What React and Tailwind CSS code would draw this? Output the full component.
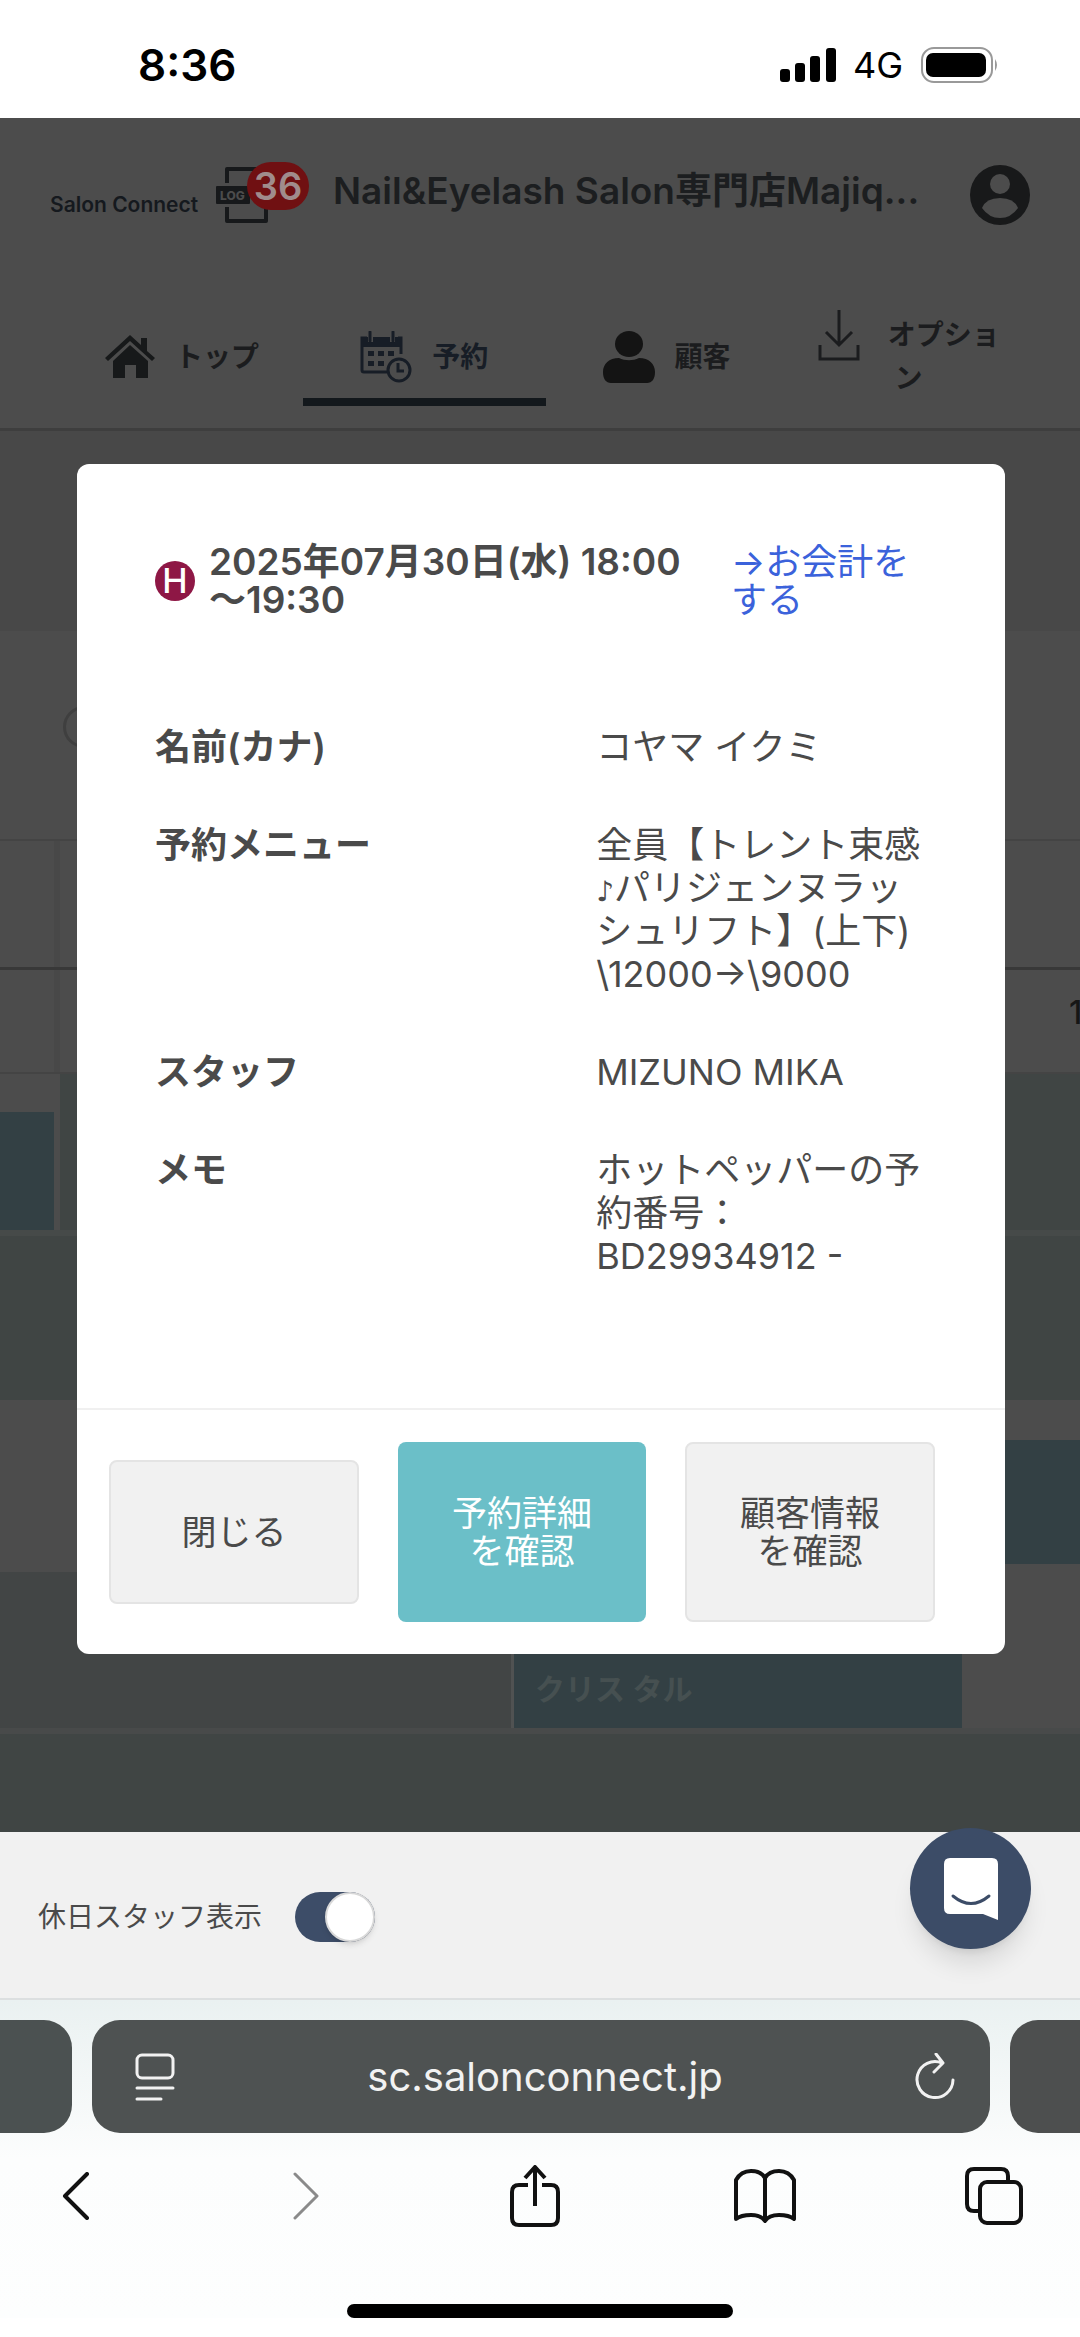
import React from "react";

function HouseIcon() {
  return (
    <svg viewBox="0 0 50 44" className="h-[44px] w-[50px] shrink-0" fill="#17191a">
      <path d="M25 0 36 10V3h6v13l8 7-3 3L25 6 3 26l-3-3z" />
      <path d="M25 10 43 26v17H31V30H20v13H8V26z" />
    </svg>
  );
}

function CalendarIcon() {
  return (
    <svg viewBox="0 0 52 52" className="h-[52px] w-[52px] shrink-0" fill="none">
      <path d="M27 41H4a2 2 0 0 1-2-2V7h5M38 7h3v16" stroke="#171d26" strokeWidth="3" />
      <path d="M2 6h6v5h5V6h17v5h5V6h7v10H2z" fill="#171d26" />
      <path d="M10 1v9M33 1v9" stroke="#171d26" strokeWidth="3" strokeLinecap="round" />
      <path d="M8 20h6v5H8zM18 20h6v5h-6zM28 20h6v5h-6zM8 30h6v5H8zM18 30h6v5h-6z" fill="#171d26" />
      <circle cx="39" cy="39" r="11" stroke="#171d26" strokeWidth="3" />
      <path d="M38 32v8h6" stroke="#171d26" strokeWidth="3" />
    </svg>
  );
}

function PersonIcon() {
  return (
    <svg viewBox="0 0 52 52" className="h-[52px] w-[52px] shrink-0" fill="#141414">
      <ellipse cx="26" cy="13" rx="14" ry="13" />
      <path d="M16 27c6 3 14 3 20 0 10 0 16 6 16 14 0 7-3 11-8 11H8c-5 0-8-4-8-11 0-8 6-14 16-14z" />
    </svg>
  );
}

function DownloadIcon() {
  return (
    <svg viewBox="0 0 42 52" className="mb-11 h-[52px] w-[42px] shrink-0" fill="none" stroke="#1b1c1e" strokeWidth="3">
      <path d="M21 1v34M8 23l13 13 13-13M2 36v14h38V36" />
    </svg>
  );
}

function LogIcon() {
  return (
    <svg viewBox="0 0 54 58" className="h-[58px] w-[54px]" fill="none">
      <path d="M11 17V3h39M11 41v14h39V40" stroke="#17191b" strokeWidth="4" strokeLinejoin="round" />
      <rect y="20" width="34" height="18" rx="1" fill="#17191b" />
      <text x="4" y="34" fontSize="12" fontWeight="800" fill="#4c4c4c" fontFamily="Inter, sans-serif">LOG</text>
    </svg>
  );
}

function Tab({ icon, label, active, gap = "gap-5" }) {
  return (
    <a
      href="#"
      className={
        "flex h-[106px] items-center justify-center text-[28px] leading-[43px] font-bold " +
        gap +
        (active ? " border-b-8 border-[#13181c] pt-4 text-[#171d26]" : " pt-2 text-[#1b1c1e]")
      }
    >
      {icon}
      <span>{label}</span>
    </a>
  );
}

function Header() {
  return (
    <header className="border-b-3 border-[#3e3e3e] bg-[#4c4c4c]">
      <div className="flex h-[182px] items-center px-[50px] pb-8">
        <span className="mt-6 w-[166px] text-[21px] font-semibold whitespace-nowrap text-[#15191e]">Salon Connect</span>
        <div className="relative mt-1 w-[117px]">
          <LogIcon />
          <span className="absolute -top-1 left-[31px] flex h-[48px] w-[62px] items-center justify-center rounded-full bg-[#701012] text-[38px] font-semibold text-[#a08c8c]">36</span>
        </div>
        <h1 className="mb-1 min-w-0 flex-1 truncate text-[37px] font-semibold text-[#1c1e20]">Nail&amp;Eyelash Salon専門店Majiq...</h1>
        <button aria-label="アカウント" className="mt-1 ml-5">
          <svg viewBox="0 0 60 60" className="h-[60px] w-[60px]">
            <circle cx="30" cy="30" r="30" fill="#18191a" />
            <circle cx="30" cy="19" r="10" fill="#4c4c4c" />
            <path d="M12 43q4-10 18-10t18 10q-7 10-18 10T12 43z" fill="#4c4c4c" />
          </svg>
        </button>
      </div>
      <nav className="grid grid-cols-4 pr-[50px] pb-[22px] pl-[61px]">
        <Tab icon={<HouseIcon />} label="トップ" />
        <Tab icon={<CalendarIcon />} label="予約" active />
        <Tab icon={<PersonIcon />} label="顧客" />
        <Tab icon={<DownloadIcon />} label={<>オプショ<br />&nbsp;ン</>} gap="gap-7" />
      </nav>
    </header>
  );
}

function Schedule() {
  return (
    <div className="bg-[#4c4c4c]">
      <div className="h-[200px] bg-[#484848]" />
      <div className="flex h-[210px] items-center border-b-2 border-[#444444] pb-4 pl-[63px]">
        <span className="h-[42px] w-[42px] rounded-full border-3 border-[#3f3f3f]" />
      </div>
      <div className="flex h-[129px] border-b-3 border-[#383838]">
        <span className="w-[60px] border-r-6 border-[#484848]" />
      </div>
      <div className="flex h-[104px] items-center justify-between border-b-2 border-[#444444]">
        <span className="h-full w-[60px] border-r-6 border-[#484848]" />
        <span className="mb-4 w-[11px] overflow-hidden text-[32px] font-medium text-[#161616]">1</span>
      </div>
      <div className="flex h-[162px] border-b-6 border-[#464a49]">
        <div className="w-[54px] pt-[38px]"><div className="h-full bg-[#334044]" /></div>
        <div className="ml-[6px] flex-1 bg-[#404544]" />
      </div>
      <div className="h-[164px] bg-[#404544]" />
      <div className="flex h-[172px] pt-10 pb-2">
        <span className="flex-1" />
        <span className="w-[80px] bg-[#334044]" />
      </div>
      <div className="flex h-[162px] border-b-6 border-[#484a4a]">
        <div className="flex-1 border-r-3 border-[#505252] bg-[#424545]" />
        <div className="flex w-[448px] items-end bg-[#334044] pb-4 pl-[21px] text-[30px] font-semibold text-[#465051]">クリス タル</div>
        <div className="w-[118px]" />
      </div>
      <div className="h-[98px] bg-[#404544]" />
    </div>
  );
}

const DETAILS = [
  ["名前(カナ)", ["コヤマ イクミ"]],
  [
    "予約メニュー",
    [
      "全員【トレント束感",
      <><span className="font-['DejaVu_Sans'] text-[28px]">♪</span>パリジェンヌラッ</>,
      "シュリフト】(上下)",
      "\\12000→\\9000",
    ],
  ],
  ["スタッフ", ["MIZUNO MIKA"]],
  ["メモ", ["ホットペッパーの予", "約番号：", "BD29934912 -"]],
];

function Dialog() {
  return (
    <section role="dialog" aria-modal="true" className="absolute top-[33px] right-[75px] left-[77px] rounded-xl bg-white text-[36px] text-[#4a4a4a]">
      <div className="flex items-center px-[78px] pt-[79px] leading-[38px]">
        <span className="flex h-10 w-10 shrink-0 items-center justify-center rounded-full bg-[#8e1745] text-[34px] font-medium text-white">H</span>
        <h2 className="ml-[14px] w-[522px] text-[37px] font-semibold whitespace-nowrap">2025年07月30日(水) 18:00<br />〜19:30</h2>
        <a href="#" className="whitespace-nowrap text-[#3b62db]">→お会計を<br />する</a>
      </div>
      <dl className="flex flex-col gap-[55px] px-[78px] pt-[107px] pb-[130px] leading-[43px]">
        {DETAILS.map(([label, lines]) => (
          <div key={label} className="grid grid-cols-[4fr_3fr]">
            <dt className="font-semibold">{label}</dt>
            <dd className="whitespace-nowrap">
              {lines.map((line, i) => <div key={i} className="h-[43px]">{line}</div>)}
            </dd>
          </div>
        ))}
      </dl>
      <div className="flex items-center gap-[39px] border-t-2 border-[#f0f0f0] px-8 py-8 text-[35px] leading-[38px]">
        <button className="h-[144px] w-[250px] rounded-lg border-2 border-[#e4e4e4] bg-[#f1f1f1]">閉じる</button>
        <button className="h-[180px] w-[248px] rounded-lg bg-[#6bbfc8] text-white">予約詳細<br />を確認</button>
        <button className="h-[180px] w-[250px] rounded-lg border-2 border-[#e4e4e4] bg-[#f1f1f1]">顧客情報<br />を確認</button>
      </div>
    </section>
  );
}

function StaffBar() {
  return (
    <div className="relative flex h-[168px] items-center gap-[33px] border-b-2 border-[#dcdfe0] bg-[#f1f1f1] pt-1 pl-[38px]">
      <label htmlFor="holiday" className="text-[28px] text-[#4a4a4a]">休日スタッフ表示</label>
      <span className="relative flex">
        <input id="holiday" type="checkbox" defaultChecked className="h-[50px] w-[80px] appearance-none rounded-full bg-[#3d4d68]" />
        <span className="pointer-events-none absolute top-0 right-0 h-[50px] w-[50px] rounded-full border-2 border-[#d8d8d8] bg-white shadow-md" />
      </span>
      <button aria-label="チャット" className="absolute -top-1 right-[49px] flex h-[121px] w-[121px] items-center justify-center rounded-full bg-[#3c4c67] shadow-xl">
        <svg viewBox="0 0 54 62" className="h-[62px] w-[54px]">
          <path d="M6 0h42q6 0 6 6v56l-15-6H6q-6 0-6-6V6q0-6 6-6z" fill="#fff" />
          <path d="M9 38q18 15 36 0" fill="none" stroke="#3c4c67" strokeWidth="3" strokeLinecap="round" />
        </svg>
      </button>
    </div>
  );
}

function ToolButton({ label, children }) {
  return (
    <button aria-label={label} className="flex h-[62px] w-[62px] items-center justify-center">
      {children}
    </button>
  );
}

function BrowserBar() {
  return (
    <footer className="bg-gradient-to-b from-[#eaf1f1] via-[#fcfdfd] via-50% to-[#fdfefe] pt-5">
      <div className="flex h-[113px] gap-5">
        <div className="w-[72px] rounded-r-[28px] bg-[#4b5151]" />
        <div className="flex flex-1 items-center justify-between rounded-[28px] bg-[#4e5252] pr-[35px] pl-[43px] text-[40px] text-[#f2f2f2]">
          <button aria-label="ページ設定">
            <svg viewBox="0 0 40 48" className="h-[48px] w-[40px]" fill="none" stroke="#f2f2f2" strokeWidth="3" strokeLinecap="round">
              <rect x="2" y="2" width="36" height="23" rx="5" />
              <path d="M2 35h36M2 46h24" />
            </svg>
          </button>
          <span>sc.salonconnect.jp</span>
          <button aria-label="再読み込み">
            <svg viewBox="0 0 40 48" className="h-[48px] w-[40px]" fill="none" stroke="#f2f2f2" strokeWidth="3" strokeLinecap="round" strokeLinejoin="round">
              <path d="M27 10A18 18 0 1 0 38 27M21 1l7 9-9 9" />
            </svg>
          </button>
        </div>
        <div className="w-[70px] rounded-l-[28px] bg-[#4d4f4f]" />
      </div>
      <div className="flex items-center justify-between pt-8 pr-[55px] pl-[45px]">
        <ToolButton label="戻る">
          <svg viewBox="0 0 28 48" className="h-[48px] w-[28px]" fill="none" stroke="#111" strokeWidth="4" strokeLinecap="round" strokeLinejoin="round"><path d="M25 2 3 24l22 22" /></svg>
        </ToolButton>
        <ToolButton label="進む">
          <svg viewBox="0 0 28 48" className="h-[48px] w-[28px]" fill="none" stroke="#8a8a8a" strokeWidth="3" strokeLinecap="round" strokeLinejoin="round"><path d="m3 2 22 22L3 46" /></svg>
        </ToolButton>
        <ToolButton label="共有">
          <svg viewBox="0 0 50 62" className="h-[62px] w-[50px]" fill="none" stroke="#111" strokeWidth="4" strokeLinejoin="round"><path d="M18 20H9q-7 0-7 7v26q0 7 7 7h32q7 0 7-7V27q0-7-7-7h-9M25 41V3M15 13 25 2l10 11" /></svg>
        </ToolButton>
        <ToolButton label="ブックマーク">
          <svg viewBox="0 0 62 54" className="h-[54px] w-[62px]" fill="none" stroke="#111" strokeWidth="4" strokeLinejoin="round"><path d="M31 9Q27 2 17 2T2 11V50Q7 46 17 46t14 6q4-6 14-6t15 4V11Q55 2 45 2T31 9zM31 9v43" /></svg>
        </ToolButton>
        <ToolButton label="タブ">
          <svg viewBox="0 0 58 58" className="h-[58px] w-[58px]" fill="none" stroke="#111" strokeWidth="4"><path d="M15 44H9q-7 0-7-7V9q0-7 7-7h27q7 0 7 7v6" /><rect x="15" y="15" width="41" height="41" rx="7" /></svg>
        </ToolButton>
      </div>
      <div className="mx-auto mt-[77px] mb-[19px] h-[14px] w-[386px] rounded-full bg-black" />
    </footer>
  );
}

export default function App() {
  return (
    <div className="w-full overflow-hidden bg-white font-['Inter','Noto_Sans_CJK_JP',sans-serif]">
      <div className="flex h-[118px] items-center bg-white pt-3 pr-[80px] pl-[138px] text-black">
        <span className="flex-1 text-[44px] font-semibold">8:36</span>
        <svg viewBox="0 0 56 36" className="h-[36px] w-[56px]">
          <rect y="22" width="10" height="13" rx="3" />
          <rect x="15" y="16" width="10" height="19" rx="3" />
          <rect x="30" y="9" width="10" height="26" rx="3" />
          <rect x="46" y="1" width="10" height="34" rx="3" />
        </svg>
        <span className="mx-[17px] text-[36px]">4G</span>
        <svg viewBox="0 0 80 36" className="h-[36px] w-[80px]">
          <rect x="2" y="1" width="70" height="34" rx="12" fill="none" stroke="#999" strokeWidth="2" />
          <rect x="6" y="6" width="60" height="24" rx="7" />
          <path d="M75 12q4 6 0 12z" fill="#999" />
        </svg>
      </div>
      <Header />
      <main className="relative">
        <Schedule />
        <Dialog />
      </main>
      <StaffBar />
      <BrowserBar />
    </div>
  );
}
